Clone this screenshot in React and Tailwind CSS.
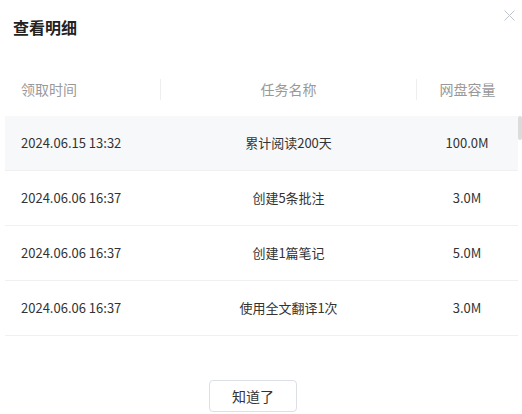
import React from "react";

const rows = [
  { time: "2024.06.15 13:32", name: "累计阅读200天", size: "100.0M" },
  { time: "2024.06.06 16:37", name: "创建5条批注", size: "3.0M" },
  { time: "2024.06.06 16:37", name: "创建1篇笔记", size: "5.0M" },
  { time: "2024.06.06 16:37", name: "使用全文翻译1次", size: "3.0M" },
];

const App = () => {
  return (
    <div
      className="relative h-[414px] w-[522px] overflow-hidden bg-white"
      style={{ fontFamily: '"Noto Sans CJK SC", "Noto Sans", sans-serif' }}
    >
      <button
        type="button"
        className="absolute right-[7px] top-[10px] text-[#c0c4cc]"
        title="关闭"
      >
        <svg width="11" height="11" viewBox="0 0 11 11" fill="none">
          <path d="M0.5 0.5L10.5 10.5M10.5 0.5L0.5 10.5" stroke="currentColor" strokeWidth="1" />
        </svg>
      </button>

      <h2 className="pl-[13px] pt-[15px] text-[16px] font-bold leading-[24px] text-[#222]">
        查看明细
      </h2>

      <div className="relative ml-[5px] mr-[4px] mt-[23px]">
        {/* header */}
        <div className="flex h-[54px] items-center text-[14px] text-[#999]">
          <div className="w-[155px] pl-[16px]">领取时间</div>
          <div className="h-[21px] w-px bg-[#eee]" />
          <div className="flex-1 text-center">任务名称</div>
          <div className="h-[21px] w-px bg-[#eee]" />
          <div className="w-[101px] text-center">网盘容量</div>
        </div>

        {rows.map((r, i) => (
          <div
            key={i}
            className={
              "flex h-[55px] items-center border-b border-[#eef0f2] text-[13px] text-[#333] " +
              (i === 0 ? "bg-[#f7f8fa]" : "bg-white")
            }
          >
            <div className="w-[156px] pl-[16px]">{r.time}</div>
            <div className="flex-1 text-center">{r.name}</div>
            <div className="w-[102px] text-center">{r.size}</div>
          </div>
        ))}

        {/* scroll thumb */}
        <div className="absolute right-[-4px] top-[54px] h-[24px] w-[4px] rounded-sm bg-[#dcdcdc]" />
      </div>

      <div className="mt-[44px] pl-[209px]">
        <button
          type="button"
          className="h-[32px] w-[88px] rounded-[4px] border border-[#dcdfe6] bg-white text-[14px] text-[#333]"
        >
          知道了
        </button>
      </div>
    </div>
  );
};

export default App;
